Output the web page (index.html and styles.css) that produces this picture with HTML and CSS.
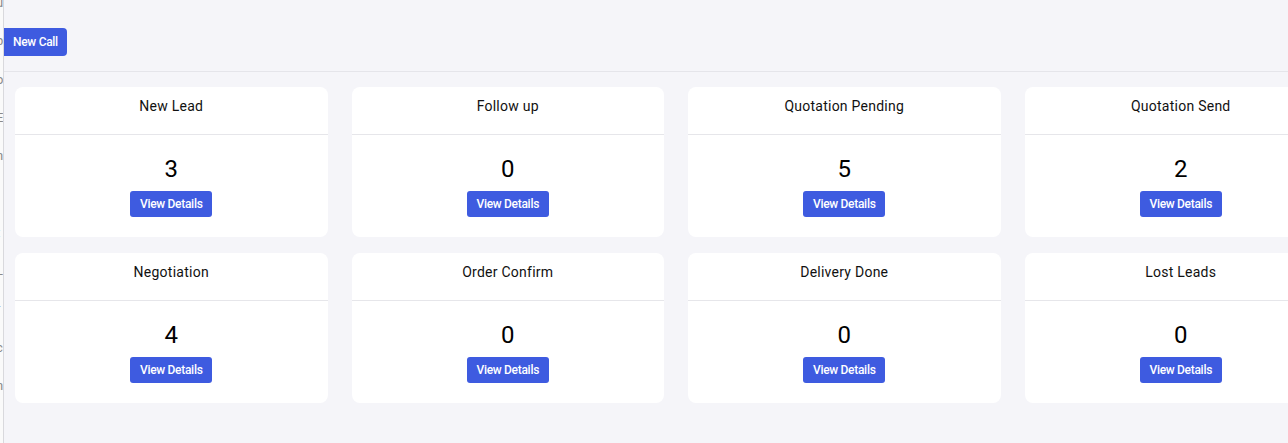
FILE: index.html
```html
<!DOCTYPE html>
<html>
<head>
<meta charset="utf-8">
<link rel="stylesheet" href="styles.css">
</head>
<body>
<div class="app">
  <aside class="sidebar">
    <ul class="menu">
      <li>u</li><li>b</li><li>o</li><li>E</li><li>n</li><li>:</li><li>t</li><li>L</li><li>r</li><li>c</li><li>n</li>
    </ul>
  </aside>
  <main class="main">
    <div class="topbar">
      <button class="btn btn-new">New Call</button>
    </div>
    <div class="grid">
      <div class="card"><div class="card-head">New Lead</div><div class="card-body"><div class="count">3</div><button class="btn btn-view">View Details</button></div></div>
      <div class="card"><div class="card-head">Follow up</div><div class="card-body"><div class="count">0</div><button class="btn btn-view">View Details</button></div></div>
      <div class="card"><div class="card-head">Quotation Pending</div><div class="card-body"><div class="count">5</div><button class="btn btn-view">View Details</button></div></div>
      <div class="card"><div class="card-head">Quotation Send</div><div class="card-body"><div class="count">2</div><button class="btn btn-view">View Details</button></div></div>
      <div class="card"><div class="card-head">Negotiation</div><div class="card-body"><div class="count">4</div><button class="btn btn-view">View Details</button></div></div>
      <div class="card"><div class="card-head">Order Confirm</div><div class="card-body"><div class="count">0</div><button class="btn btn-view">View Details</button></div></div>
      <div class="card"><div class="card-head">Delivery Done</div><div class="card-body"><div class="count">0</div><button class="btn btn-view">View Details</button></div></div>
      <div class="card"><div class="card-head">Lost Leads</div><div class="card-body"><div class="count">0</div><button class="btn btn-view">View Details</button></div></div>
    </div>
  </main>
</div>
</body>
</html>
```
FILE: styles.css
```css
* { box-sizing: border-box; }
html, body {
  margin: 0;
  padding: 0;
  width: 1288px;
  height: 443px;
  overflow: hidden;
  background: #f5f5f9;
  font-family: Roboto, "Liberation Sans", Arial, sans-serif;
}
.app {
  display: flex;
  height: 443px;
}
.sidebar {
  flex: 0 0 4px;
  width: 4px;
  background: #fafafa;
  border-right: 1px solid #d9d9dd;
  overflow: hidden;
}
.menu {
  list-style: none;
  margin: -16px 0 0 0;
  padding: 0;
}
.menu li {
  height: 38.3px;
  line-height: 38.3px;
  font-size: 13px;
  color: #8a8a8a;
  margin-left: -4px;
  white-space: nowrap;
}
.main {
  flex: 1 1 auto;
  min-width: 0;
}
.topbar {
  height: 72px;
  padding-top: 28px;
  border-bottom: 1px solid #e5e5ea;
}
.btn {
  border: none;
  background: #3e5be0;
  color: #fff;
  font-family: Roboto, "Liberation Sans", Arial, sans-serif;
  font-weight: 500;
  font-size: 12px;
  letter-spacing: -0.3px;
  cursor: pointer;
}
.btn-new {
  height: 28px;
  padding: 0 9px;
  border-radius: 0 4px 4px 0;
}
.grid {
  display: grid;
  grid-template-columns: repeat(4, 312.5px);
  column-gap: 24px;
  row-gap: 16px;
  padding: 15px 0 0 11px;
  width: 1340px;
}
.card {
  background: #fff;
  border-radius: 8px;
}
.card-head {
  height: 48px;
  border-bottom: 1px solid #e6e6ea;
  display: flex;
  align-items: center;
  justify-content: center;
  padding-bottom: 9px;
  font-size: 14px;
  font-weight: 400;
  letter-spacing: 0.25px;
  color: #111;
}
.card-body {
  height: 102px;
  padding-top: 20px;
  display: flex;
  flex-direction: column;
  align-items: center;
}
.count {
  height: 28px;
  line-height: 28px;
  font-size: 24px;
  font-weight: 400;
  color: #000;
}
.btn-view {
  margin-top: 8px;
  height: 26px;
  width: 82px;
  padding: 0;
  border-radius: 3px;
}
```
